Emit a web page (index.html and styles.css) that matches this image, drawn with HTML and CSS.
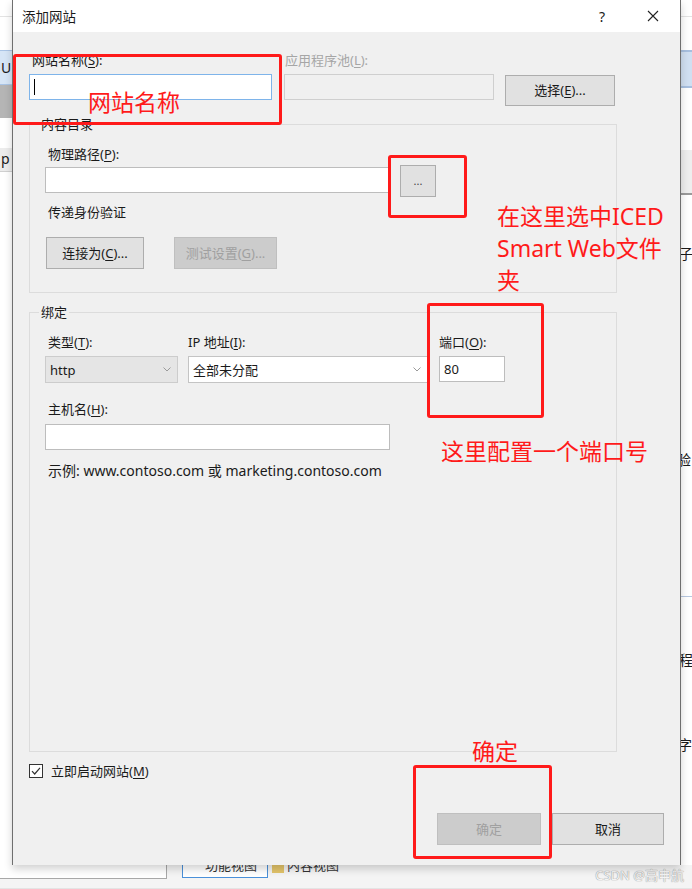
FILE: index.html
```html
<!DOCTYPE html>
<html lang="zh-CN">
<head>
  <meta charset="utf-8" />
  <title>添加网站</title>
  <link rel="stylesheet" href="styles.css">
</head>
<body>
  <div class="desk">
    <div class="app-left">
      <div class="al-line"></div>
      <div class="al-blue">U</div>
      <div class="al-gray"></div>
      <div class="al-p">p</div>
    </div>

    <main class="dialog" role="dialog" aria-labelledby="dlg-title">
      <div class="titlebar">
        <span class="title" id="dlg-title">添加网站</span>
        <span class="help">?</span>
        <span class="close">
          <svg width="12" height="12" viewBox="0 0 12 12"><path d="M1 1L11 11M11 1L1 11" stroke="#222" stroke-width="1.1" fill="none"/></svg>
        </span>
      </div>

      <div class="dlg-body">
        <div class="row-top">
          <div class="field f-name">
            <label>网站名称(<u>S</u>):</label>
            <div class="input is-focus"><span class="caret"></span></div>
          </div>
          <div class="field f-pool">
            <label class="muted">应用程序池(<u>L</u>):</label>
            <div class="input is-disabled"></div>
          </div>
          <button class="btn btn-select">选择(<u>E</u>)...</button>
        </div>

        <fieldset class="group group-content">
          <legend>内容目录</legend>
          <label>物理路径(<u>P</u>):</label>
          <div class="path-row">
            <div class="input path-input"></div>
            <button class="btn btn-browse">...</button>
          </div>
          <div class="sub-label">传递身份验证</div>
          <div class="auth-row">
            <button class="btn btn-connect">连接为(<u>C</u>)...</button>
            <button class="btn btn-test" disabled>测试设置(<u>G</u>)...</button>
          </div>
        </fieldset>

        <fieldset class="group group-binding">
          <legend>绑定</legend>
          <div class="bind-row">
            <div class="field f-type">
              <label>类型(<u>T</u>):</label>
              <div class="select is-gray">
                <span>http</span>
                <svg width="8" height="5" viewBox="0 0 8 5"><path d="M0.5 0.5L4 4L7.5 0.5" stroke="#9a9a9a" fill="none"/></svg>
              </div>
            </div>
            <div class="field f-ip">
              <label>IP 地址(<u>I</u>):</label>
              <div class="select">
                <span>全部未分配</span>
                <svg width="8" height="5" viewBox="0 0 8 5"><path d="M0.5 0.5L4 4L7.5 0.5" stroke="#9a9a9a" fill="none"/></svg>
              </div>
            </div>
            <div class="field f-port">
              <label>端口(<u>O</u>):</label>
              <div class="input port-input">80</div>
            </div>
          </div>
          <label class="host-label">主机名(<u>H</u>):</label>
          <div class="input host-input"></div>
          <div class="example">示例: www.contoso.com 或 marketing.contoso.com</div>
        </fieldset>

        <div class="check-row">
          <span class="checkbox">
            <svg width="12" height="12" viewBox="0 0 12 12"><path d="M2 6.2L4.7 9L10 2.8" stroke="#333" stroke-width="1.2" fill="none"/></svg>
          </span>
          <span>立即启动网站(<u>M</u>)</span>
        </div>

        <div class="actions">
          <button class="btn btn-ok" disabled>确定</button>
          <button class="btn btn-cancel">取消</button>
        </div>
      </div>
    </main>

    <div class="app-right">
      <div class="ar-line"></div>
      <div class="ar-blue"></div>
      <div class="ar-gray"></div>
      <div class="ar-char c1">子</div>
      <div class="ar-char c2">验</div>
      <div class="ar-rule"></div>
      <div class="ar-char c3">程</div>
      <div class="ar-char c4">字</div>
    </div>

    <div class="app-bottom">
      <div class="ab-panel"></div>
      <div class="ab-tab"><span>功能视图</span></div>
      <div class="ab-tab2"><span class="ab-icon"></span><span>内容视图</span></div>
      <div class="watermark">CSDN @高申航</div>
    </div>

    <!-- red annotations drawn over the screenshot -->
    <div class="mark box-name"></div>
    <div class="mark box-browse"></div>
    <div class="mark box-port"></div>
    <div class="mark box-ok"></div>
    <div class="note note-name">网站名称</div>
    <div class="note note-browse">在这里选中ICED<br>Smart Web文件<br>夹</div>
    <div class="note note-port">这里配置一个端口号</div>
    <div class="note note-ok">确定</div>
  </div>
</body>
</html>
```

FILE: styles.css
```css
:root {
  --face: #f0f0f0;
  --text: #1a1a1a;
  --muted: #a6a6a6;
  --btn: #e1e1e1;
  --btn-border: #adadad;
  --field-border: #bdbdbd;
  --group: #dcdcdc;
  --red: #ff1a1a;
}
* { box-sizing: border-box; }
html, body {
  margin: 0;
  width: 692px;
  height: 889px;
  overflow: hidden;
  font-family: "Noto Sans", "Noto Sans CJK SC", sans-serif;
  font-size: 13px;
  color: var(--text);
  background: #fff;
}
u { text-decoration-thickness: 1px; text-underline-offset: 2px; }

.desk {
  position: relative;
  display: grid;
  grid-template-columns: 12px 669px 11px;
  grid-template-rows: 865px 24px;
  width: 692px;
  height: 889px;
}

/* background application, left of the dialog */
.app-left { background: #fff; overflow: hidden; display: flex; flex-direction: column; }
.al-line { height: 1px; margin-top: 16px; background: #e3e3e3; }
.al-blue {
  margin-top: 33px; height: 35px;
  background: #d6e5f6; border-top: 1px solid #a9c4e6; border-bottom: 1px solid #a9c4e6;
  line-height: 33px; font-size: 14px; padding-left: 1px;
}
.al-gray { height: 33px; background: #b5b5b5; }
.al-p {
  margin-top: 30px; height: 24px; background: #ececec;
  border-bottom: 1px solid #d0d0d0;
  line-height: 22px; font-size: 14px; padding-left: 1px;
}

/* dialog */
.dialog {
  display: flex;
  flex-direction: column;
  background: var(--face);
  border-left: 1px solid #6f6f6f;
  border-right: 1px solid #6f6f6f;
  box-shadow: 0 4px 8px rgba(0, 0, 0, 0.18);
  position: relative;
  z-index: 1;
}
.titlebar {
  height: 32px;
  flex: none;
  background: #fff;
  display: flex;
  align-items: center;
  padding-left: 9px;
}
.title { font-size: 13.5px; flex: 1; }
.help { width: 18px; text-align: center; font-size: 14px; margin-right: 33px; }
.close { width: 18px; display: grid; place-items: center; margin-right: 18px; }

.dlg-body {
  flex: 1;
  display: flex;
  flex-direction: column;
  padding: 19px 16px 20px 16px;
}
label, .sub-label { display: block; line-height: 18px; padding-left: 3px; }
.muted { color: var(--muted); }

.row-top { display: flex; align-items: flex-start; }
.field { display: flex; flex-direction: column; }
.field label { margin-bottom: 5px; }
.f-name { width: 243px; }
.f-pool { width: 210px; margin-left: 12px; }
.f-pool label { padding-left: 1px; }

.input {
  height: 26px;
  background: #fff;
  border: 1px solid var(--field-border);
  padding: 0 4px;
  line-height: 24px;
}
.input.is-focus { border-color: #7eb4ea; display: flex; align-items: center; }
.caret { width: 1px; height: 16px; background: #000; }
.input.is-disabled { background: var(--face); border-color: #cfcfcf; }

.btn {
  font: inherit;
  color: var(--text);
  background: var(--btn);
  border: 1px solid var(--btn-border);
  height: 32px;
  padding: 0;
  line-height: 30px;
  text-align: center;
  white-space: nowrap;
}
.btn[disabled] { background: #cccccc; border-color: #bfbfbf; color: #a0a0a0; }
.btn-select { width: 110px; margin: 24px 0 0 11px; height: 31px; line-height: 29px; }

.group {
  margin: 0;
  padding: 12px 15px 23px 15px;
  border: 1px solid var(--group);
  width: 588px;
  min-width: 0;
}
.group legend { padding: 0 2px; margin-left: -6px; line-height: 18px; }
.group-content { margin-top: 9px; }
.path-row { display: flex; align-items: flex-start; margin-top: 2px; }
.path-input { width: 345px; height: 26px; margin-top: 2px; }
.btn-browse { width: 36px; margin-left: 10px; font-size: 11px; color: #444; line-height: 26px; }
.sub-label { margin-top: 6px; }
.auth-row { display: flex; gap: 30px; margin-top: 16px; padding-left: 1px; }
.btn-connect { width: 98px; }
.btn-test { width: 103px; }

.group-binding { margin-top: 10px; flex: 1; }
.bind-row { display: flex; }
.f-type { width: 133px; }
.f-ip { width: 240px; margin-left: 10px; }
.f-port { width: 66px; margin-left: 11px; }
.f-ip label, .f-port label { padding-left: 0; }
.select {
  height: 27px;
  background: #fff;
  border: 1px solid #c4c4c4;
  display: flex;
  align-items: center;
  justify-content: space-between;
  padding: 0 6px 0 4px;
}
.select.is-gray { background: #e5e5e5; border-color: #cccccc; }
.port-input { height: 26px; }
.host-label { margin-top: 17px; }
.host-input { width: 345px; margin-top: 6px; }
.example { margin-top: 12px; line-height: 18px; font-size: 14px; padding-left: 3px; }

.check-row { display: flex; align-items: center; gap: 8px; margin-top: 11px; line-height: 16px; }
.checkbox {
  width: 14px; height: 14px;
  border: 1px solid #333;
  background: #fff;
  display: grid; place-items: center;
}
.actions { margin-top: 34px; display: flex; justify-content: flex-end; gap: 11px; }
.btn-ok { width: 104px; }
.btn-cancel { width: 112px; }

/* background application, right of the dialog */
.app-right { background: #fff; position: relative; overflow: hidden; display: flex; flex-direction: column; }
.ar-line { height: 1px; margin-top: 16px; background: #e3e3e3; }
.ar-blue { margin-top: 33px; height: 38px; background: #d0dff1; border-top: 2px solid #a7bfdf; border-bottom: 2px solid #a7bfdf; }
.ar-gray { margin-top: 62px; height: 45px; background: #eeeeee; border-bottom: 2px solid #9a9a9a; box-shadow: 0 9px 0 -8px #c7d3e6; }
.ar-rule { position: absolute; left: 0; right: 0; top: 596px; height: 1px; background: #b7c8e0; }
.ar-char { position: absolute; left: -2px; font-size: 14px; line-height: 16px; }
.c1 { top: 246px; }
.c2 { top: 452px; left: -4px; }
.c3 { top: 652px; }
.c4 { top: 737px; left: -3px; }

/* background application, below the dialog */
.app-bottom {
  grid-column: 1 / 4;
  position: relative;
  background: #f4f4f4;
  border-bottom: 1px solid #e4e4e4;
  overflow: hidden;
}
.ab-panel { position: absolute; left: 0; top: 0; width: 167px; height: 14px; background: #fff; border-right: 1px solid #a8a8a8; border-bottom: 1px solid #a8a8a8; }
.ab-tab {
  position: absolute; left: 182px; top: 0; width: 86px; height: 13px;
  background: #fff; border: 1px solid #4a90d9; border-top: 0;
  overflow: hidden; font-size: 13px; color: #333;
}
.ab-tab span { display: block; margin: -8px 0 0 22px; line-height: 16px; }
.ab-tab2 { position: absolute; left: 272px; top: 0; height: 12px; overflow: hidden; display: flex; gap: 3px; font-size: 13px; color: #333; }
.ab-tab2 span { margin-top: -8px; line-height: 16px; }
.ab-icon { width: 12px; height: 16px; background: #e4c56a; }
.watermark {
  position: absolute; right: 8px; top: 2px;
  font-size: 13px; line-height: 16px;
  color: #f4f4f4;
  text-shadow: 0 0 1px #9a9a9a, 0 0 1px #9a9a9a;
}

/* red annotations */
.mark { position: absolute; border: 3px solid var(--red); border-radius: 3px; z-index: 2; }
.box-name { left: 13px; top: 54px; width: 269px; height: 71px; }
.box-browse { left: 388px; top: 155px; width: 79px; height: 63px; }
.box-port { left: 427px; top: 303px; width: 117px; height: 115px; }
.box-ok { left: 413px; top: 765px; width: 139px; height: 94px; }
.note { position: absolute; z-index: 2; color: var(--red); font-size: 23px; line-height: 32px; white-space: nowrap; }
.note-name { left: 88px; top: 86px; }
.note-browse { left: 497px; top: 200px; }
.note-port { left: 441px; top: 435px; }
.note-ok { left: 472px; top: 735px; }
```
